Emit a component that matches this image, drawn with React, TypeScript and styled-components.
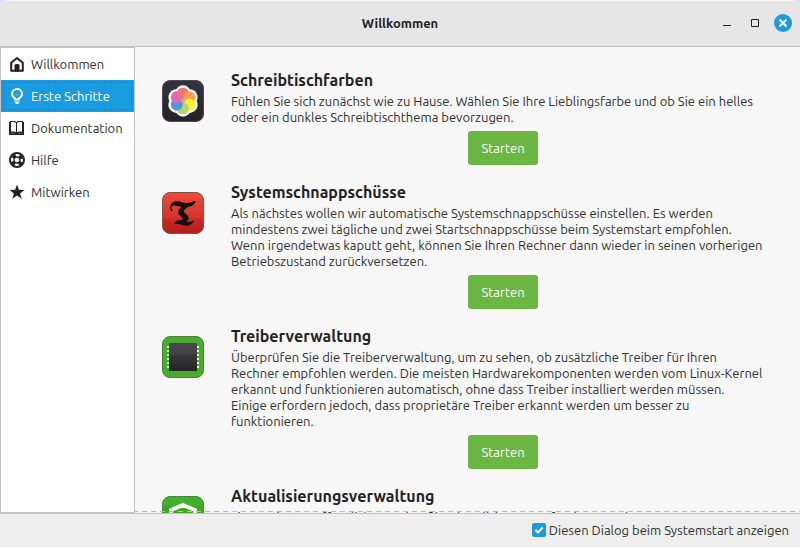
import React from "react";
import styled, { createGlobalStyle, css } from "styled-components";

const GlobalStyle = createGlobalStyle`
  * { box-sizing: border-box; }
  html, body, #root { height: 100%; }
  body {
    margin: 0;
    background: #d3e3fb;
    color: #303030;
    font-family: Ubuntu, "Noto Sans", sans-serif;
    font-size: 13px;
    line-height: 16px;
  }
  button, input { font: inherit; }
`;

const Window = styled.div`
  display: flex;
  flex-direction: column;
  height: 100vh;
  overflow: hidden;
  border-radius: 8px 8px 0 0;
  background: #eeeeee;
`;

const TitleBar = styled.header`
  display: grid;
  grid-template-columns: 1fr auto 1fr;
  align-items: center;
  flex: none;
  height: 47px;
  padding: 0 7px 2px;
  background: #e6e6e6;
  border-top: 1px solid #f4f4f4;
  border-bottom: 1px solid #c2c2c2;
`;

const WindowTitle = styled.h1`
  grid-column: 2;
  margin: 0;
  font-size: 13px;
  font-weight: 700;
  color: #222222;
`;

const WindowControls = styled.div`
  display: flex;
  justify-content: flex-end;
  align-items: center;
  gap: 8px;
`;

const ControlButton = styled.button`
  display: grid;
  place-items: center;
  width: 20px;
  height: 20px;
  padding: 0;
  border: 0;
  background: none;
  svg { display: block; }
`;

const Body = styled.div`
  display: flex;
  flex: 1;
  min-height: 0;
  border-bottom: 1px solid #c2c2c2;
`;

const Sidebar = styled.nav`
  flex: none;
  width: 135px;
  background: #ffffff;
  border: 1px solid #c2c2c2;
`;

const NavItem = styled.button<{ $active?: boolean }>`
  display: flex;
  align-items: center;
  gap: 6px;
  width: 100%;
  height: 32px;
  padding: 0 8px;
  border: 0;
  background: transparent;
  color: #303030;
  white-space: nowrap;
  text-align: left;
  svg { flex: none; }
  ${(p) =>
    p.$active &&
    css`
      background: #1a9bdf;
      color: #ffffff;
      outline: 1px dashed #1589c6;
      outline-offset: -3px;
    `}
`;

const Content = styled.main`
  flex: 1;
  min-width: 0;
  overflow: hidden;
  display: flex;
  flex-direction: column;
  background: #f7f7f7;
`;

const Steps = styled.div`
  flex: 1;
  min-height: 0;
  overflow: hidden;
  padding: 22px 25px 0 27px;
`;

const OverflowEdge = styled.div`
  flex: none;
  height: 1px;
  margin-top: -2px;
  margin-bottom: 1px;
  background: repeating-linear-gradient(90deg, #bdbdbd 0 3px, transparent 3px 7px, #bdbdbd 7px 9px);
`;

const Step = styled.section`
  display: grid;
  grid-template-columns: 42px 1fr;
  column-gap: 27px;
  padding-bottom: 16px;
`;

const StepIcon = styled.div`
  padding-top: 11px;
  svg { display: block; }
`;

const StepBody = styled.div`
  display: flex;
  flex-direction: column;
`;

const StepTitle = styled.h2`
  margin: 0 0 2px;
  font-size: 16px;
  line-height: 22px;
  font-weight: 600;
  color: #222222;
`;

const StepText = styled.p`
  margin: 0 0 6px;
  white-space: pre-line;
`;

const StartButton = styled.button`
  align-self: center;
  width: 70px;
  height: 34px;
  padding: 0;
  border: 0;
  border-radius: 3px;
  background: #6cb643;
  color: #ffffff;
`;

const Footer = styled.footer`
  display: flex;
  justify-content: flex-end;
  align-items: center;
  flex: none;
  height: 33px;
  padding: 0 11px 1px;
`;

const StartupLabel = styled.label`
  display: flex;
  align-items: center;
  gap: 3px;
`;

const StartupCheck = styled.input`
  appearance: none;
  width: 14px;
  height: 14px;
  margin: 0;
  border-radius: 2px;
  background: #1a9bdf
    url("data:image/svg+xml,%3Csvg xmlns='http://www.w3.org/2000/svg' viewBox='0 0 14 14'%3E%3Cpath d='M3.5 7l2.5 2.5 4.7-5' fill='none' stroke='white' stroke-width='2'/%3E%3C/svg%3E")
    center / 14px 14px no-repeat;
`;

const HomeIcon = () => (
  <svg width="16" height="16" viewBox="0 0 16 16">
    <path d="M2.200 14.800V6.800L8 2l5.800 4.800v8Z" fill="none" stroke="#222" strokeWidth="2" strokeLinejoin="round" />
    <path d="M5.500 15.500V9.500q0-1.500 1.500-1.500h2q1.500 0 1.500 1.500v6Z" fill="#222" />
  </svg>
);

const BulbIcon = () => (
  <svg width="16" height="16" viewBox="0 0 16 16">
    <path d="M6 11.500V10.300C4.200 9.300 3 7.800 3 6a5 5 0 0 1 10 0C13 7.800 11.800 9.300 10 10.300v1.200Z" fill="none" stroke="#fff" strokeWidth="2" strokeLinejoin="round" />
    <path d="M6.500 6.500q1.500 1 3 0" fill="none" stroke="#8bcdf0" />
    <path d="M5.500 13.500h5v1h-1v1.500h-3v-1.500h-1Z" fill="#fff" />
  </svg>
);

const BookIcon = () => (
  <svg width="16" height="16" viewBox="0 0 16 16">
    <path d="M1 1h5l1.500 1L9 1h5v1h1v13H0V2h1Z" fill="#222" />
    <path d="M2 2h3.500L7 3v9.200L5.500 11.500H2ZM13 2H9.500L8 3v9.200l1.500-.7H13Z" fill="#fff" />
    <path d="M1.500 13.200h4.500M9 13.200h4.500" fill="none" stroke="#999" strokeWidth=".6" />
  </svg>
);

const HelpIcon = () => (
  <svg width="16" height="16" viewBox="0 0 16 16">
    <circle cx="8" cy="8" r="7" fill="none" stroke="#222" strokeWidth="2" />
    <circle cx="8" cy="8" r="4.500" fill="none" stroke="#222" strokeWidth="3.500" strokeDasharray="3.500 3.570" strokeDashoffset="-1.780" />
    <circle cx="8" cy="8" r="3" fill="none" stroke="#222" strokeWidth="1.300" />
  </svg>
);

const StarIcon = () => (
  <svg width="16" height="16" viewBox="0 0 16 16">
    <path d="M8 .5l1.900 5.300 5.600.2-4.400 3.400 1.600 5.400L8 11.600l-4.700 3.200 1.600-5.400L.5 6l5.600-.2Z" fill="#222" />
  </svg>
);

const petals = ["#ef7472", "#ff9d51", "#fff02f", "#b8d66a", "#5199dc", "#de65c2"];

const ColorsIcon = () => (
  <svg width="42" height="42" viewBox="0 0 42 42">
    <defs>
      <linearGradient id="dark" x2="0" y2="1">
        <stop stopColor="#35343f" />
        <stop offset="1" stopColor="#242126" />
      </linearGradient>
      <clipPath id="petalSeam">
        <rect x="10" y="5" width="11" height="16" />
      </clipPath>
    </defs>
    <rect x=".5" y=".5" width="41" height="41" rx="7.500" fill="url(#dark)" stroke="#4d4b50" />
    {petals.map((c, i) => (
      <circle key={c} cx="21" cy="13.300" r="8" fill="#fff" transform={`rotate(${i * 60} 21 21)`} />
    ))}
    {petals.map((c, i) => (
      <circle key={c} cx="21" cy="13.800" r="6" fill={c} transform={`rotate(${i * 60} 21 21)`} />
    ))}
    <circle cx="21" cy="13.800" r="6" fill={petals[0]} clipPath="url(#petalSeam)" />
    <circle cx="21" cy="21" r="2" fill="#b8b48c" />
  </svg>
);

const SnapshotIcon = () => (
  <svg width="42" height="42" viewBox="0 0 42 42">
    <defs>
      <linearGradient id="red" x2="0" y2="1">
        <stop stopColor="#ed4b3d" />
        <stop offset=".62" stopColor="#d4352b" />
        <stop offset=".64" stopColor="#c82c25" />
        <stop offset="1" stopColor="#b41d19" />
      </linearGradient>
    </defs>
    <rect x=".5" y=".5" width="41" height="41" rx="7.500" fill="url(#red)" stroke="#87504b" />
    <path
      d="M10 19.500C7 17 7.500 10.500 13 9.500c5-1 8 2 13 1.500 3-.3 4.500-2 8-2-1 3-4 5.800-8 5.800-1.500 1.700-4 2.500-4 4.700 0 2 4.500 3 4.500 6.500 0 1.500-.8 2.500-2 3.500 3.500.8 5 0 7.500-.8-1.500 3.500-4 5-7.500 5-4 0-7-2.700-13-1.200 2-4.500 4.500-4.500 7-4.200 2-.6 2.500-1.200 1.700-2.400-1-1.800-4.200-3-4.200-5.800 0-2.700 2.500-4 3.500-5.300-4-.5-7-2.200-9.500-.5-1.200 1-.8 2.800.8 3.600Z"
      fill="#111"
    />
  </svg>
);

const DriverIcon = () => (
  <svg width="42" height="42" viewBox="0 0 42 42">
    <defs>
      <linearGradient id="chip" x2="0" y2="1">
        <stop stopColor="#4a474c" />
        <stop offset=".4" stopColor="#414244" />
        <stop offset=".42" stopColor="#353a39" />
        <stop offset="1" stopColor="#242625" />
      </linearGradient>
    </defs>
    <rect x=".5" y=".5" width="41" height="41" rx="7.500" fill="#4aac2d" stroke="#4c7e3e" />
    {[10, 14, 18, 22, 26, 30].map((y) => (
      <path key={y} d={`M5 ${y}h2v2H5zM35 ${y}h2v2h-2z`} fill="#e9efe6" />
    ))}
    <rect x="7" y="7" width="28" height="28" fill="url(#chip)" />
  </svg>
);

const UpdateIcon = () => (
  <svg width="42" height="42" viewBox="0 0 42 42">
    <rect x=".5" y=".5" width="41" height="41" rx="7.500" fill="#3aa821" stroke="#527f49" />
    <path d="M1 8a7 7 0 0 1 7-7h26a7 7 0 0 1 7 7v2H1Z" fill="#41b12a" />
    <path d="M21 9l12 5v8.500c0 6-6 10-12 12-6-2-12-6-12-12V14Z" fill="none" stroke="#fff" strokeWidth="4" />
    <path d="M15 22l5 5 8-9" fill="none" stroke="#fff" strokeWidth="4" />
  </svg>
);

const navItems = [
  { label: "Willkommen", icon: <HomeIcon /> },
  { label: "Erste Schritte", icon: <BulbIcon />, active: true },
  { label: "Dokumentation", icon: <BookIcon /> },
  { label: "Hilfe", icon: <HelpIcon /> },
  { label: "Mitwirken", icon: <StarIcon /> },
];

const steps = [
  {
    title: "Schreibtischfarben",
    icon: <ColorsIcon />,
    text: "Fühlen Sie sich zunächst wie zu Hause. Wählen Sie Ihre Lieblingsfarbe und ob Sie ein helles\noder ein dunkles Schreibtischthema bevorzugen.",
  },
  {
    title: "Systemschnappschüsse",
    icon: <SnapshotIcon />,
    text: "Als nächstes wollen wir automatische Systemschnappschüsse einstellen. Es werden\nmindestens zwei tägliche und zwei Startschnappschüsse beim Systemstart empfohlen.\nWenn irgendetwas kaputt geht, können Sie Ihren Rechner dann wieder in seinen vorherigen\nBetriebszustand zurückversetzen.",
  },
  {
    title: "Treiberverwaltung",
    icon: <DriverIcon />,
    text: "Überprüfen Sie die Treiberverwaltung, um zu sehen, ob zusätzliche Treiber für Ihren\nRechner empfohlen werden. Die meisten Hardwarekomponenten werden vom Linux-Kernel\nerkannt und funktionieren automatisch, ohne dass Treiber installiert werden müssen.\nEinige erfordern jedoch, dass proprietäre Treiber erkannt werden um besser zu\nfunktionieren.",
  },
  {
    title: "Aktualisierungsverwaltung",
    icon: <UpdateIcon />,
    text: "Linux Mint veröffentlicht regelmäßig Aktualisierungen für Ihren Rechner.",
  },
];

export default function App() {
  return (
    <>
      <GlobalStyle />
      <Window>
        <TitleBar>
          <WindowTitle>Willkommen</WindowTitle>
          <WindowControls>
            <ControlButton aria-label="Minimieren">
              <svg width="20" height="20"><path d="M6 12h8v1H6z" fill="#222" /></svg>
            </ControlButton>
            <ControlButton aria-label="Maximieren">
              <svg width="20" height="20"><path d="M6.500 6.500h7v7h-7z" fill="none" stroke="#222" /></svg>
            </ControlButton>
            <ControlButton aria-label="Schließen">
              <svg width="20" height="20">
                <circle cx="10" cy="10" r="9" fill="#1a9bdf" />
                <path d="M6.500 6.500l7 7m0-7l-7 7" stroke="#fff" strokeWidth="2" />
              </svg>
            </ControlButton>
          </WindowControls>
        </TitleBar>
        <Body>
          <Sidebar>
            {navItems.map((item) => (
              <NavItem key={item.label} $active={item.active}>
                {item.icon}
                {item.label}
              </NavItem>
            ))}
          </Sidebar>
          <Content>
            <Steps>
              {steps.map((step) => (
                <Step key={step.title}>
                  <StepIcon>{step.icon}</StepIcon>
                  <StepBody>
                    <StepTitle>{step.title}</StepTitle>
                    <StepText>{step.text}</StepText>
                    <StartButton>Starten</StartButton>
                  </StepBody>
                </Step>
              ))}
            </Steps>
            <OverflowEdge />
          </Content>
        </Body>
        <Footer>
          <StartupLabel>
            <StartupCheck type="checkbox" defaultChecked />
            Diesen Dialog beim Systemstart anzeigen
          </StartupLabel>
        </Footer>
      </Window>
    </>
  );
}
